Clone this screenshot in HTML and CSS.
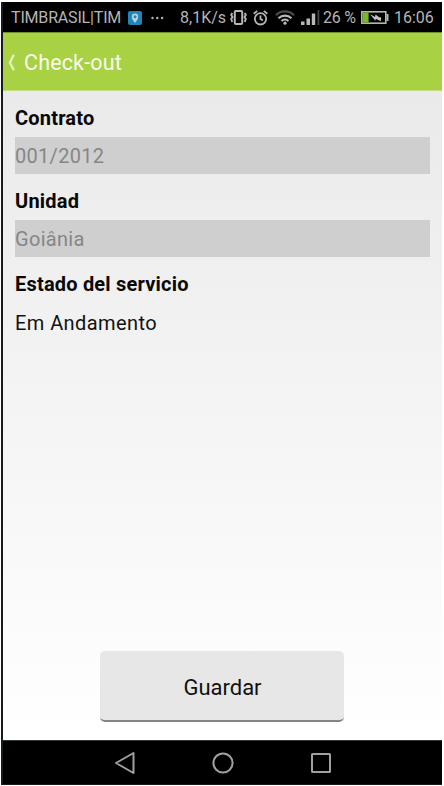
FILE: index.html
```html
<!DOCTYPE html>
<html lang="es">
<head>
<meta charset="utf-8">
<title>Check-out</title>
<link rel="stylesheet" href="styles.css">
</head>
<body>
<div class="phone">
  <div class="status">
    <span class="carrier">TIMBRASIL|TIM</span>
    <svg class="pin" width="14" height="14" viewBox="0 0 14 14"><rect width="14" height="14" rx="2" fill="#1f87b8"/><path d="M7 12C5 9.500 3.800 8 3.800 5.800a3.200 3.200 0 0 1 6.400 0C10.200 8 9 9.500 7 12z" fill="#b9d3de"/><circle cx="7" cy="5.800" r="1.500" fill="#1f87b8"/></svg>
    <svg class="dots" width="13" height="4" viewBox="0 0 13 4" fill="#b5b5b5"><circle cx="1.500" cy="2" r="1.200"/><circle cx="6.300" cy="2" r="1.200"/><circle cx="11.100" cy="2" r="1.200"/></svg>
    <span class="speed">8,1K/s</span>
    <svg class="vibrate" width="17" height="15" viewBox="0 0 17 15" fill="none" stroke="#b5b5b5"><rect x="4.800" y="1" width="7.400" height="13" rx="1" stroke-width="2"/><path d="M2.200 3l-1 2 1.300 2-1.300 2 1 3M14.800 3l1 2-1.300 2 1.300 2-1 3" stroke-width="1.900"/></svg>
    <svg class="alarm" width="15" height="16" viewBox="0 0 15 16" fill="none" stroke="#b5b5b5" stroke-width="1.800"><circle cx="7.500" cy="8.800" r="5.700"/><path d="M7.500 5.500V9l2.400 1.400M.7 3.800L4.200.9M14.300 3.800L10.800.9"/></svg>
    <svg class="wifi" width="20" height="15" viewBox="0 0 20 15" fill="none"><path d="M1 5.200c5-5 13-5 18 0" stroke="#494949" stroke-width="2.200"/><path d="M3.500 8.200c3.800-3.500 9.200-3.500 13 0M6.500 11c2-1.900 5-1.900 7 0" stroke="#b8b8b8" stroke-width="2.200"/><circle cx="10" cy="13.200" r="1.600" fill="#b8b8b8"/></svg>
    <svg class="signal" width="19" height="15" viewBox="0 0 19 15" fill="#b8b8b8"><path d="M0 11.500h3.500V15H0zM5.500 8.500H9V15H5.500zM10.800 3.500h3.400V15h-3.400z"/><path d="M16.500 0h1.800v15h-1.800z" fill="#444"/></svg>
    <span class="percent">26 %</span>
    <svg class="battery" width="28" height="15" viewBox="0 0 28 15"><rect x=".8" y="1.800" width="24" height="11.400" fill="none" stroke="#b5b5b5" stroke-width="1.600"/><path d="M25.500 4h2v7h-2z" fill="#b5b5b5"/><path d="M1.600 2.500h6v10h-6z" fill="#79b928"/><path d="M9 4l5 3 .5-2.500 4 3 1.700-.2-.4 4-5-2.500-.5 2z" fill="#c5c5c5"/></svg>
    <span class="clock">16:06</span>
  </div>
  <header class="header">
    <svg width="7" height="17" viewBox="0 0 7 17"><path d="M5.800.8L1.900 8.500l3.900 7.700" fill="none" stroke="#e3f0bd" stroke-width="2.400"/></svg>
    <span class="title">Check-out</span>
  </header>
  <main class="content">
    <div class="label contract">Contrato</div>
    <div class="field number">001/2012</div>
    <div class="label unit">Unidad</div>
    <div class="field city">Goiânia</div>
    <div class="label state">Estado del servicio</div>
    <div class="value">Em Andamento</div>
    <button class="save" type="button">Guardar</button>
  </main>
  <nav class="nav">
    <svg width="22" height="24" viewBox="0 0 22 24"><path d="M2 12L19.500 2v20z"/></svg>
    <svg width="22" height="24" viewBox="0 0 22 24"><circle cx="11" cy="12" r="9.600"/></svg>
    <svg width="22" height="24" viewBox="0 0 22 24"><rect x="2" y="3" width="18" height="18" rx=".5"/></svg>
  </nav>
</div>
</body>
</html>
```
FILE: styles.css
```css
* { box-sizing: border-box; }
body { margin: 0; background: #fff; font-family: Roboto, "Liberation Sans", sans-serif; }
.phone {
  width: 441px;
  height: 783px;
  margin: 2px 0 0 1px;
  border-left: 2px solid #161b20;
  display: flex;
  flex-direction: column;
}
.status {
  height: 30px;
  flex: none;
  background: #000;
  color: #b5b5b5;
  display: flex;
  align-items: center;
  padding: 1px 0 0 8px;
  font-size: 16px;
  line-height: 20px;
  white-space: nowrap;
}
.status span, .status svg { flex: none; }
.carrier { width: 110px; letter-spacing: -.17px; }
.pin { margin-left: 7px; }
.dots { margin-left: 9px; }
.speed { width: 46px; margin-left: 16px; }
.vibrate { margin-left: 4px; }
.alarm { margin-left: 6px; }
.wifi { margin-left: 7px; }
.signal { margin-left: 6px; }
.percent { width: 34px; margin-left: 3px; letter-spacing: -.25px; }
.battery { margin-left: 4px; }
.clock { margin-left: 5px; }
.header {
  height: 59px;
  flex: none;
  background: #a9d144;
  border-top: 1px solid #719026;
  border-bottom: 1px solid #c4dc88;
  display: flex;
  align-items: center;
  padding: 1px 0 0 5px;
}
.title { margin-left: 9px; font-size: 21.5px; letter-spacing: .15px; color: #f7faeb; }
.content {
  flex: 1;
  background: linear-gradient(#eaeaea, #fff);
  padding: 15px 12px 0;
  display: flex;
  flex-direction: column;
  font-size: 20px;
  color: #111;
}
.label { height: 31px; line-height: 24px; font-weight: 700; color: #080808; letter-spacing: .2px; }
.field {
  height: 37px;
  line-height: 39px;
  margin-bottom: 15px;
  background: #cfcfcf;
  color: #868686;
  letter-spacing: .3px;
}
.value { line-height: 24px; margin-top: 8px; letter-spacing: .42px; }
.save {
  width: 244px;
  height: 71px;
  margin: auto 0 18px 85px;
  padding: 3px 0 0 1px;
  border: 0;
  border-bottom: 2px solid #858585;
  border-radius: 5px;
  background: #e7e7e7;
  color: #111;
  font: 22px Roboto, "Liberation Sans", sans-serif;
}
.nav {
  height: 45px;
  flex: none;
  background: #000;
  border-top: 1px solid #343836;
  border-bottom: 1px solid #161b20;
  display: flex;
  align-items: center;
  padding-left: 111px;
  gap: 76px;
}
.nav svg { fill: none; stroke: #a0a0a0; stroke-width: 2; stroke-linejoin: round; }
```
